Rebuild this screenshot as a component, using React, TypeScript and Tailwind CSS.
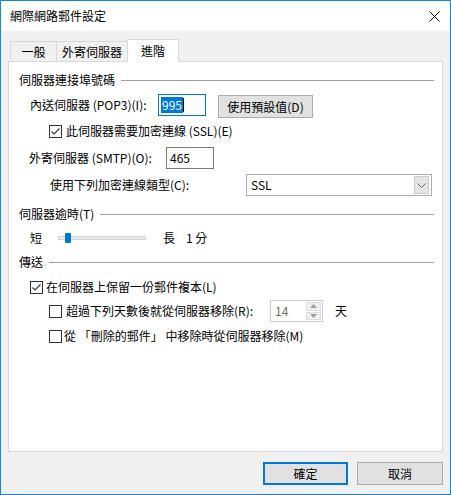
import type { ReactNode } from 'react';

// 網際網路郵件設定 — 進階 tab (Windows 10 dialog look)

function CheckBox({ checked = false }: { checked?: boolean }) {
  return (
    <span className="w-[13px] h-[13px] border border-[#333333] bg-white flex items-center justify-center shrink-0">
      {checked && (
        <svg width="11" height="11" viewBox="0 0 11 11" fill="none">
          <path d="M1.5 5.5 L4 8 L9.5 2.5" stroke="#333333" strokeWidth="1.1" />
        </svg>
      )}
    </span>
  );
}

function GroupHeader({ label, className = '' }: { label: string; className?: string }) {
  return (
    <div className={`flex items-center h-4 pl-[10px] pr-2 ${className}`}>
      <span>{label}</span>
      <span className="flex-1 h-px bg-[#a0a0a0] ml-[6px]" />
    </div>
  );
}

function Tab({ label, active = false, className = '' }: { label: string; active?: boolean; className?: string }) {
  return (
    <div
      className={
        active
          ? `h-[23px] -mb-px bg-white border border-[#d9d9d9] border-b-0 flex items-center justify-center whitespace-nowrap relative z-10 ${className}`
          : `h-[20px] bg-[#f0f0f0] border border-[#d9d9d9] border-b-0 flex items-center justify-center whitespace-nowrap ${className}`
      }
    >
      {label}
    </div>
  );
}

function Row({ children, className = '' }: { children: ReactNode; className?: string }) {
  return <div className={`flex items-center ${className}`}>{children}</div>;
}

export default function App() {
  return (
    <div className="w-[451px] h-[495px] border border-[#1883d7] bg-[#f0f0f0] flex flex-col text-[12px] leading-4 text-black font-['Noto_Sans_CJK_TC','Noto_Sans',sans-serif]">
      {/* title bar */}
      <div className="h-[30px] bg-white flex items-center justify-between pl-[9px] pr-[10px] shrink-0">
        <span>網際網路郵件設定</span>
        <svg width="11" height="11" viewBox="0 0 11 11" fill="none">
          <path d="M0.5 0.5 L10.5 10.5 M10.5 0.5 L0.5 10.5" stroke="#000" strokeWidth="1" />
        </svg>
      </div>

      <div className="px-[7px] flex flex-col flex-1">
        {/* tabs */}
        <div className="flex items-end pl-[2px] mt-[8px]">
          <Tab label="一般" className="w-[47px]" />
          <Tab label="外寄伺服器" className="w-[71px] border-l-0" />
          <Tab label="進階" active className="w-[52px] -ml-px" />
        </div>

        {/* panel */}
        <div className="h-[391px] bg-white border border-[#d9d9d9] flex flex-col">
          <GroupHeader label="伺服器連接埠號碼" className="mt-[10px]" />

          <div className="flex items-start h-[24px] mt-[6px] pl-[21px]">
            <span className="w-[128px] h-[22px] flex items-center">內送伺服器 (POP3)(I):</span>
            <div className="w-[48px] h-[22px] border border-[#0078d7] flex items-center pl-[2px]">
              <span className="bg-[#0078d7] text-white px-px leading-[16px]">995</span>
              <span className="w-px h-[14px] bg-black" />
            </div>
            <button className="ml-[12px] mt-px w-[95px] h-[23px] bg-[#e1e1e1] border border-[#adadad] flex items-center justify-center">
              使用預設值(D)
            </button>
          </div>

          <Row className="h-4 mt-[5px] pl-[40px]">
            <CheckBox checked />
            <span className="ml-[4px]">此伺服器需要加密連線 (SSL)(E)</span>
          </Row>

          <Row className="h-[22px] mt-[8px] pl-[20px]">
            <span className="w-[137px]">外寄伺服器 (SMTP)(O):</span>
            <div className="w-[48px] h-[22px] border border-[#7a7a7a] flex items-center pl-[3px]">465</div>
          </Row>

          <Row className="h-[22px] mt-[5px] pl-[41px]">
            <span className="w-[196px]">使用下列加密連線類型(C):</span>
            <div className="w-[186px] h-[22px] border border-[#adadad] flex items-center justify-between pl-[4px] pr-[2px]">
              <span>SSL</span>
              <span className="w-[15px] h-[18px] bg-[#e5e5e5] border border-[#cccccc] flex items-center justify-center">
                <svg width="9" height="5" viewBox="0 0 9 5" fill="none">
                  <path d="M0.5 0.5 L4.5 4.5 L8.5 0.5" stroke="#606060" strokeWidth="1" />
                </svg>
              </span>
            </div>
          </Row>

          <GroupHeader label="伺服器逾時(T)" className="mt-[10px]" />

          <Row className="h-4 mt-[8px] pl-[21px]">
            <span className="w-[28px]">短</span>
            <div className="relative w-[88px] h-[4px] bg-[#e7eaea] border border-[#d6d6d6]">
              <span className="absolute left-[6px] -top-[4px] w-[6px] h-[10px] bg-[#0078d7] rounded-[1px]" />
            </div>
            <span className="ml-[17px]">長</span>
            <span className="ml-[11px]">1 分</span>
          </Row>

          <GroupHeader label="傳送" className="mt-[8px]" />

          <Row className="h-4 mt-[9px] pl-[21px]">
            <CheckBox checked />
            <span className="ml-[3px]">在伺服器上保留一份郵件複本(L)</span>
          </Row>

          <Row className="h-[22px] mt-[5px] pl-[40px]">
            <CheckBox />
            <span className="ml-[4px] w-[204px]">超過下列天數後就從伺服器移除(R):</span>
            <div className="w-[53px] h-[22px] border border-[#cccccc] flex items-center justify-between pl-[4px] pr-[1px]">
              <span className="text-[#6d6d6d]">14</span>
              <div className="w-[15px] h-[18px] flex flex-col gap-px">
                <span className="flex-1 bg-[#f0f0f0] border border-[#dcdcdc] flex items-center justify-center">
                  <svg width="7" height="4" viewBox="0 0 7 4"><path d="M0 4 L3.5 0 L7 4 Z" fill="#a0a0a0" /></svg>
                </span>
                <span className="flex-1 bg-[#f0f0f0] border border-[#dcdcdc] flex items-center justify-center">
                  <svg width="7" height="4" viewBox="0 0 7 4"><path d="M0 0 L3.5 4 L7 0 Z" fill="#a0a0a0" /></svg>
                </span>
              </div>
            </div>
            <span className="ml-[12px]">天</span>
          </Row>

          <Row className="h-4 mt-[6px] pl-[40px]">
            <CheckBox />
            <span className="ml-[2px] whitespace-pre">從 「刪除的郵件」 中移除時從伺服器移除(M)</span>
          </Row>
        </div>

        {/* footer buttons */}
        <div className="flex justify-end gap-[9px] mt-[10px]">
          <button className="w-[85px] h-[23px] bg-[#e1e1e1] border-2 border-[#0078d7] flex items-center justify-center">
            確定
          </button>
          <button className="w-[86px] h-[23px] bg-[#e1e1e1] border border-[#adadad] flex items-center justify-center">
            取消
          </button>
        </div>
      </div>
    </div>
  );
}
